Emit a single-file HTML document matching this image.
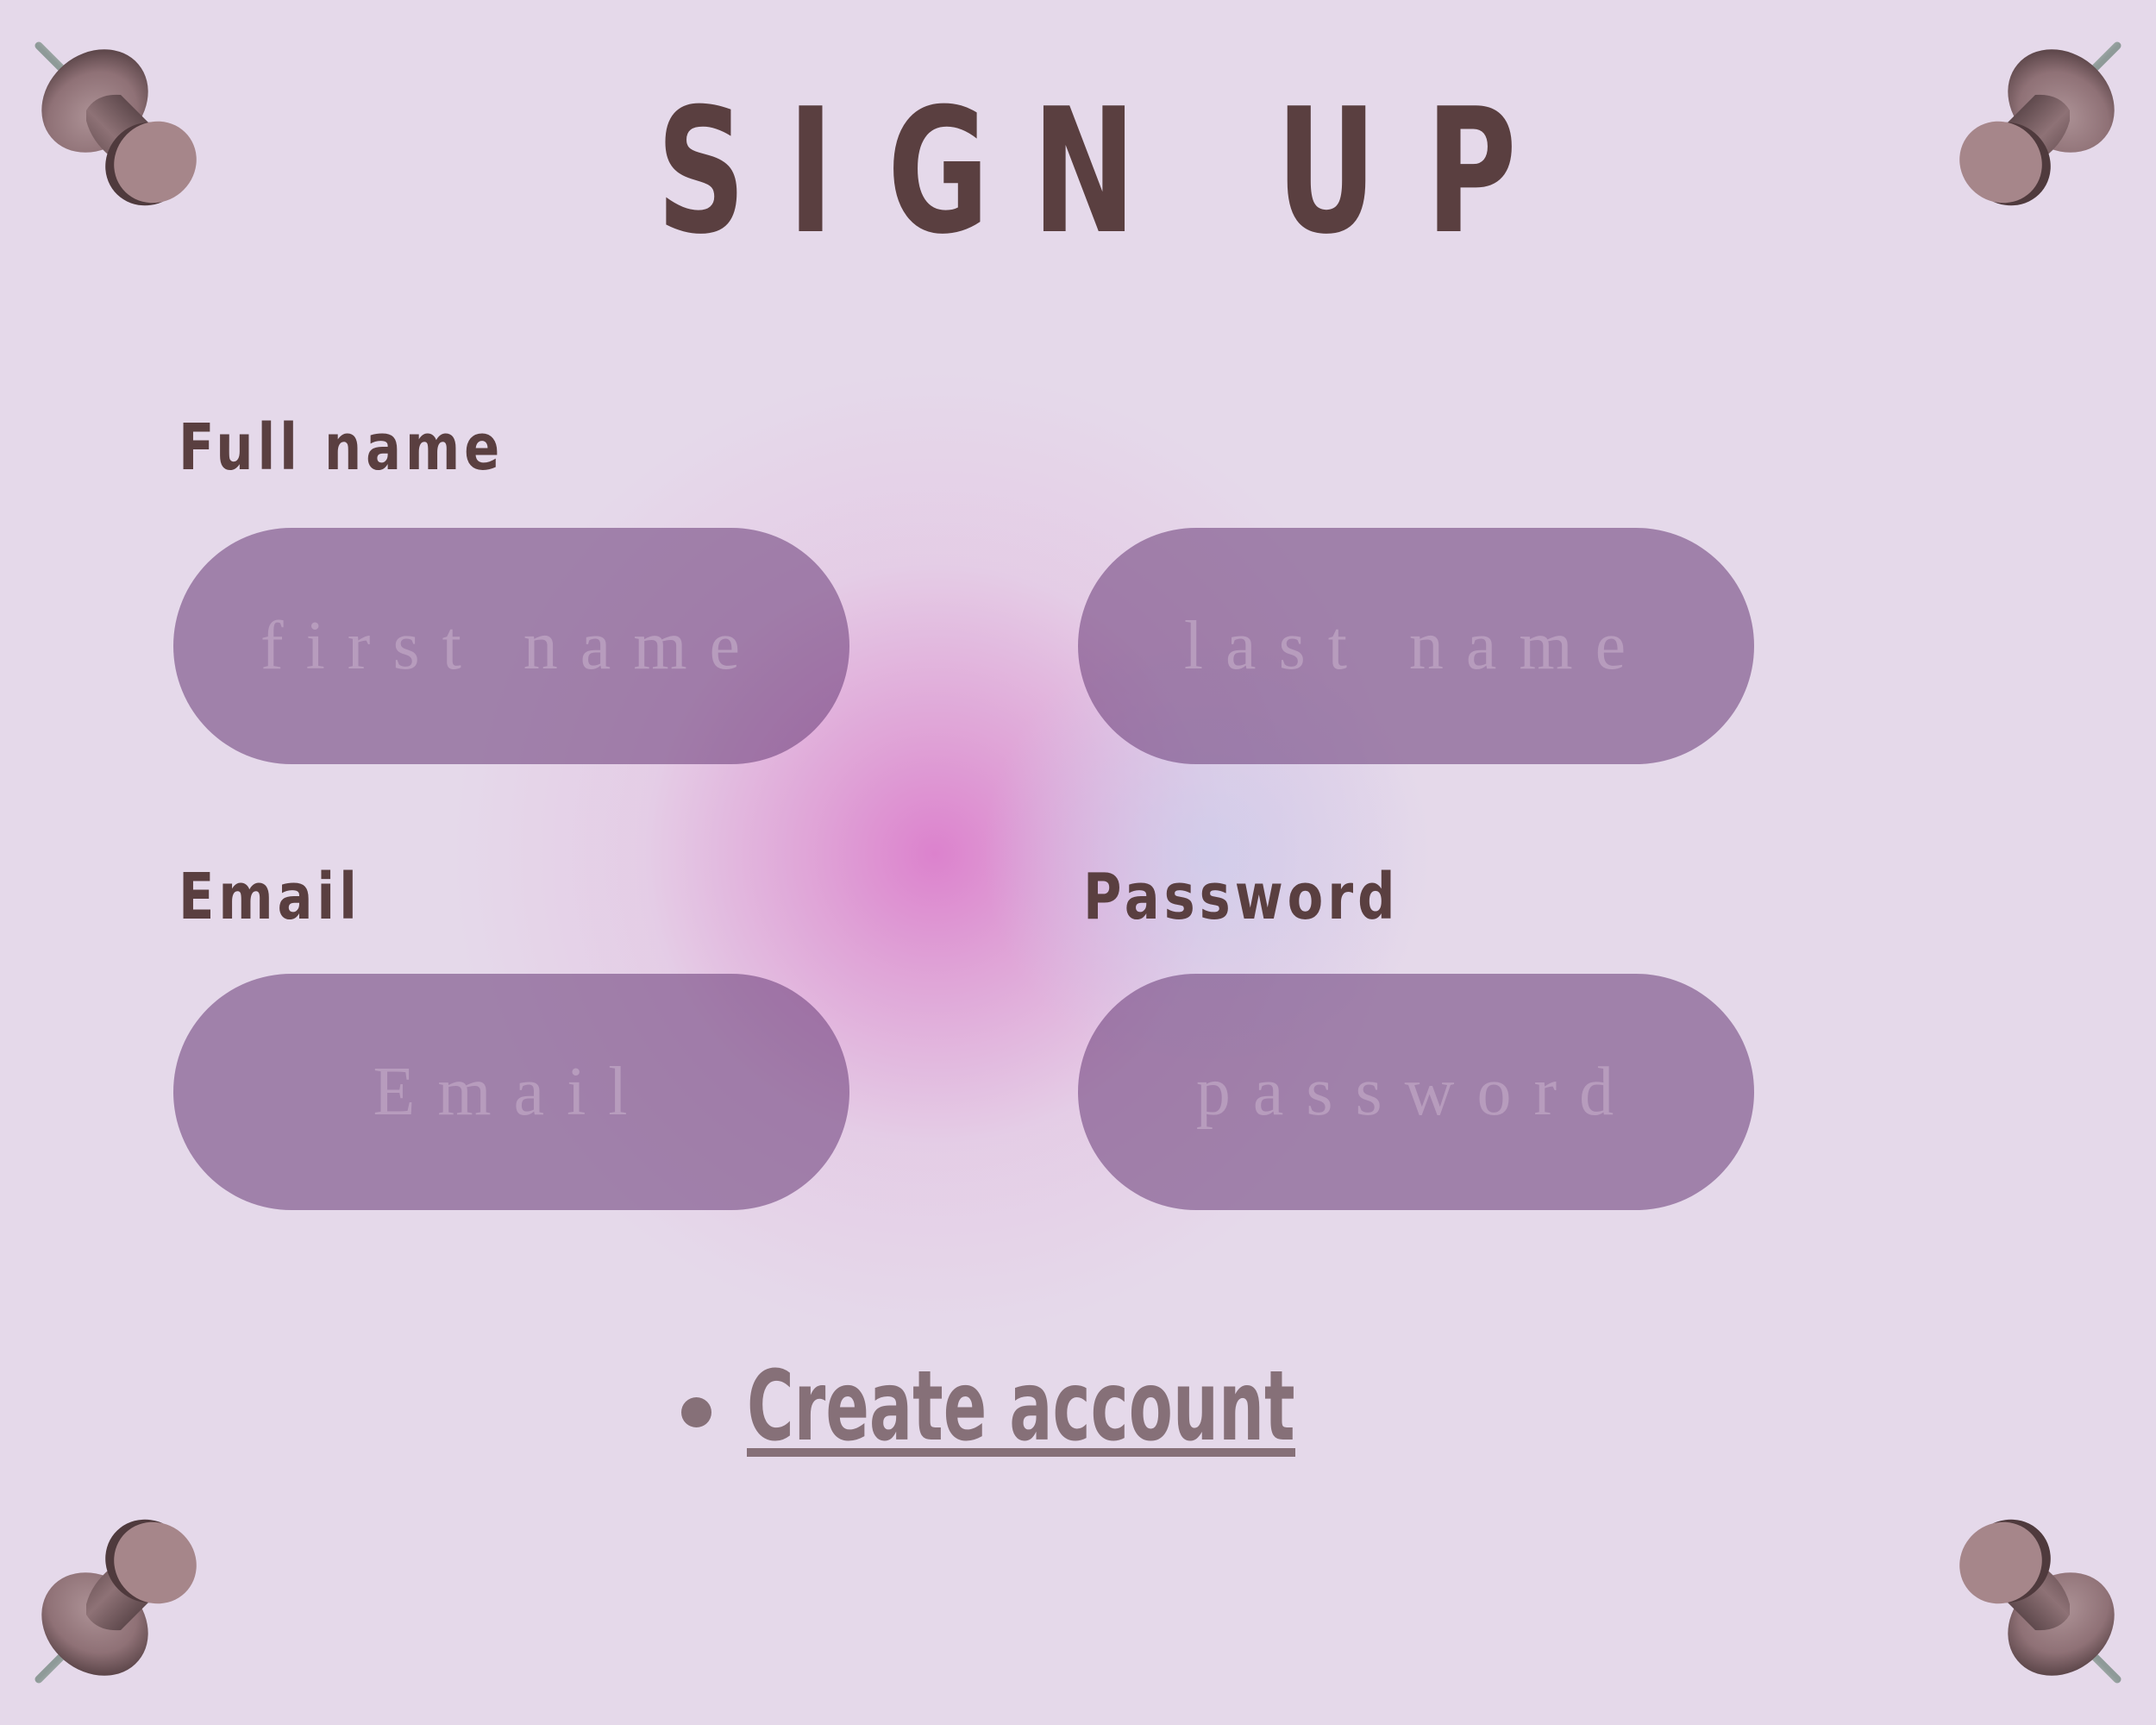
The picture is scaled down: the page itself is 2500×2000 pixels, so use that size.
<!DOCTYPE html>
<html><head><meta charset="utf-8"><style>
html,body{margin:0;padding:0}
body{width:2500px;height:2000px;position:relative;overflow:hidden;background:#e5d9ea;font-family:"Liberation Sans",sans-serif}
.glow{position:absolute;left:0;top:0;width:2500px;height:2000px;
background:radial-gradient(ellipse 560px 560px at 1084px 990px,rgba(220,130,205,1) 0%,rgba(222,150,210,0.8) 25%,rgba(228,190,225,0.45) 60%,rgba(229,217,234,0) 100%);}
.glow2{position:absolute;left:0;top:0;width:2500px;height:2000px;
background:radial-gradient(ellipse 260px 260px at 1400px 990px,rgba(205,205,235,0.8) 0%,rgba(205,205,235,0) 100%);}
.t{position:absolute;top:100px;font-family:"DejaVu Sans",sans-serif;font-weight:bold;font-size:200px;color:#5a3f40;transform:translateX(-50%) scaleX(0.72);line-height:1}
.lab{position:absolute;font-family:"DejaVu Sans",sans-serif;font-weight:bold;color:#5a3f40;font-size:74px;line-height:1;letter-spacing:6px;transform-origin:0 0;transform:scaleX(0.82)}
.box{position:absolute;width:784px;height:274px;border-radius:137px;background:rgba(110,66,124,0.58);display:flex;align-items:center;justify-content:center;font-family:"Liberation Serif",serif;font-size:80px;color:#b79cbd;letter-spacing:26px}
.pin{position:absolute;width:300px;height:300px}
</style></head><body>
<div class="glow"></div><div class="glow2"></div>

<div class="t" style="left:813px">S</div>
<div class="t" style="left:940px">I</div>
<div class="t" style="left:1088px">G</div>
<div class="t" style="left:1257px">N</div>
<div class="t" style="left:1538px">U</div>
<div class="t" style="left:1706px">P</div>

<div class="lab" style="left:207px;top:482px">Full name</div>
<div class="lab" style="left:207px;top:1003px">Email</div>
<div class="lab" style="left:1256px;top:1003px">Password</div>

<div class="box" style="left:201px;top:612px">first name</div>
<div class="box" style="left:1250px;top:612px">last name</div>
<div class="box" style="left:201px;top:1129px">Email</div>
<div class="box" style="left:1250px;top:1129px">password</div>

<div style="position:absolute;left:790px;top:1620px;width:35px;height:35px;border-radius:50%;background:#867078"></div>
<div style="position:absolute;left:866px;top:1575px;font-family:'DejaVu Sans',sans-serif;font-weight:bold;font-size:112px;color:#867078;line-height:1;transform-origin:0 0;transform:scaleX(0.665);white-space:nowrap">Create account</div>
<div style="position:absolute;left:866px;top:1679px;width:636px;height:10px;background:#867078"></div>

<svg width="0" height="0" style="position:absolute">
<defs>
<linearGradient id="nd" x1="0" y1="0" x2="1" y2="-1"><stop offset="0" stop-color="#8e9a98"/><stop offset="0.5" stop-color="#d4dad8"/><stop offset="1" stop-color="#8e9a98"/></linearGradient>
<radialGradient id="bk" cx="0.4" cy="0.6" r="0.7"><stop offset="0" stop-color="#ad9296"/><stop offset="0.6" stop-color="#8f7176"/><stop offset="1" stop-color="#4e3a3d"/></radialGradient>
<linearGradient id="cy" x1="0" y1="1" x2="1" y2="0"><stop offset="0" stop-color="#5e474a"/><stop offset="0.4" stop-color="#8e7276"/><stop offset="1" stop-color="#3e2d30"/></linearGradient>
<g id="pinG">
<line x1="45" y1="53" x2="85" y2="93" stroke="url(#nd)" stroke-width="9" stroke-linecap="round"/>
<ellipse cx="110" cy="117" rx="66" ry="55" transform="rotate(-40 110 117)" fill="url(#bk)"/>
<path d="M100 128 Q112 108 140 110 L180 150 L140 190 Q108 170 100 140 Z" fill="url(#cy)"/>
<ellipse cx="171" cy="190" rx="50" ry="47" transform="rotate(-40 171 190)" fill="#4f3a3d"/>
<ellipse cx="180" cy="188" rx="49" ry="46" transform="rotate(-40 180 188)" fill="#a6868a"/>
</g>
</defs>
</svg>
<svg class="pin" style="left:0;top:0" viewBox="0 0 300 300"><use href="#pinG"/></svg>
<svg class="pin" style="left:2200px;top:0;transform:scaleX(-1)" viewBox="0 0 300 300"><use href="#pinG"/></svg>
<svg class="pin" style="left:0;top:1700px;transform:scaleY(-1)" viewBox="0 0 300 300"><use href="#pinG"/></svg>
<svg class="pin" style="left:2200px;top:1700px;transform:scale(-1,-1)" viewBox="0 0 300 300"><use href="#pinG"/></svg>
</body></html>
